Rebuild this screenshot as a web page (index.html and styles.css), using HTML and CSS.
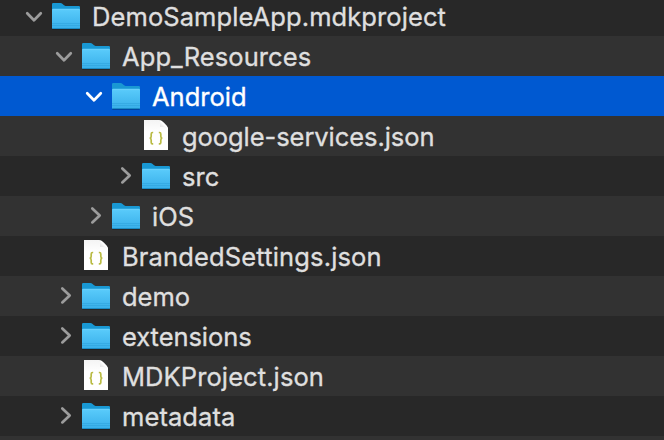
FILE: index.html
```html
<!DOCTYPE html>
<html lang="en">
<head>
<meta charset="utf-8">
<title>Project files</title>
<link rel="stylesheet" href="styles.css">
</head>
<body>
<svg class="defs" width="0" height="0" aria-hidden="true">
  <defs>
    <linearGradient id="front" x1="0" y1="0" x2="0" y2="1">
      <stop offset="0" stop-color="#60cdfb"/><stop offset=".12" stop-color="#56c8f9"/><stop offset="1" stop-color="#38afe9"/>
    </linearGradient>
    <linearGradient id="page" x1="0" y1="0" x2="0" y2="1">
      <stop offset="0" stop-color="#f4f4f4"/><stop offset=".4" stop-color="#fff"/>
    </linearGradient>
    <linearGradient id="fold" x1="0" y1="1" x2="1" y2="0">
      <stop offset="0" stop-color="#d2d2d2"/><stop offset=".5" stop-color="#fff"/>
    </linearGradient>
    <symbol id="folder" viewBox="0 0 32 40">
      <path d="M2.300 32.600h27.400v1.300H2.300z" fill="#000" opacity=".25"/>
      <path d="M2 8.200Q2 7 3.200 7h7.300q1 0 1.800.8l1.400 1.300q.8.8 1.800.8h13.300Q30 9.900 30 11.200V18H2z" fill="#1998d3"/>
      <path d="M2 14q0-1.200 1.200-1.200h25.600q1.200 0 1.200 1.200v17.800q0 1.200-1.200 1.200H3.200Q2 33 2 31.800z" fill="url(#front)"/>
      <path d="M2.500 13.400h27" stroke="#76d7ff" stroke-width=".8" opacity=".6"/>
      <path d="M2 27.500h28M2 29.500h28" stroke="#2498d2" stroke-width=".7" opacity=".5"/>
      <path d="M2.500 32.500h27" stroke="#1684bd" stroke-width="1" opacity=".85"/>
    </symbol>
    <symbol id="file" viewBox="0 0 32 40">
      <path d="M4 4h15.500L28 12v22H4z" fill="url(#page)"/>
      <path d="M19.500 4q1.200 3 .5 6.700 4-.4 8 1.600Q27.500 10 24 6.800 21.500 4.300 19.500 4z" fill="url(#fold)"/>
      <path d="M13.200 16.500h-.7q-1.300 0-1.300 1.400v2.300q0 1.700-1.400 2 1.400.3 1.400 2V26.500q0 1.400 1.300 1.400h.7M18.800 16.500h.7q1.300 0 1.300 1.400v2.300q0 1.700 1.400 2-1.400.3-1.400 2V26.500q0 1.400-1.300 1.400h-.7" fill="none" stroke="#b9bb45" stroke-width="1.700"/>
    </symbol>
    <symbol id="down" viewBox="0 0 28 40">
      <path d="M7.200 17.200 14 24.300l6.800-7.100" fill="none" stroke="currentColor" stroke-width="2.700" stroke-linecap="round" stroke-linejoin="round"/>
    </symbol>
    <symbol id="right" viewBox="0 0 28 40">
      <path d="M12.300 12.400 19.700 19.400l-7.400 7" fill="none" stroke="currentColor" stroke-width="2.700" stroke-linecap="round" stroke-linejoin="round"/>
    </symbol>
  </defs>
</svg>
<main class="tree">
  <div class="row"><svg class="chevron"><use href="#down"/></svg><svg class="icon"><use href="#folder"/></svg><span class="name loose">DemoSampleApp.mdkproject</span></div>
  <div class="row level-1"><svg class="chevron"><use href="#down"/></svg><svg class="icon"><use href="#folder"/></svg><span class="name loose">App_Resources</span></div>
  <div class="row level-2 selected"><svg class="chevron"><use href="#down"/></svg><svg class="icon"><use href="#folder"/></svg><span class="name">Android</span></div>
  <div class="row level-3"><span class="chevron"></span><svg class="icon"><use href="#file"/></svg><span class="name tight">google-services.json</span></div>
  <div class="row level-3"><svg class="chevron"><use href="#right"/></svg><svg class="icon"><use href="#folder"/></svg><span class="name">src</span></div>
  <div class="row level-2"><svg class="chevron"><use href="#right"/></svg><svg class="icon"><use href="#folder"/></svg><span class="name loose">iOS</span></div>
  <div class="row level-1"><span class="chevron"></span><svg class="icon"><use href="#file"/></svg><span class="name looser">BrandedSettings.json</span></div>
  <div class="row level-1"><svg class="chevron"><use href="#right"/></svg><svg class="icon"><use href="#folder"/></svg><span class="name">demo</span></div>
  <div class="row level-1"><svg class="chevron"><use href="#right"/></svg><svg class="icon"><use href="#folder"/></svg><span class="name tight">extensions</span></div>
  <div class="row level-1"><span class="chevron"></span><svg class="icon"><use href="#file"/></svg><span class="name loose">MDKProject.json</span></div>
  <div class="row level-1"><svg class="chevron"><use href="#right"/></svg><svg class="icon"><use href="#folder"/></svg><span class="name loose">metadata</span></div>
  <div class="row"></div>
</main>
</body>
</html>
```
FILE: styles.css
```css
* { box-sizing: border-box; }
body { margin: 0; height: 440px; overflow: hidden; background: #282828; }
.defs { position: absolute; }
.tree {
  height: 440px;
  overflow: hidden;
  display: flex;
  flex-direction: column;
  font: 400 25.5px/42px Inter, "Liberation Sans", sans-serif;
  color: #dfdfdf;
}
.row {
  flex: none;
  display: flex;
  height: 40px;
  padding-left: 20px;
  background: #282828;
  white-space: nowrap;
}
.row:first-child { height: 36px; align-items: flex-end; }
.row:nth-child(even) { background: #323232; }
.row.level-1 { padding-left: 50px; }
.row.level-2 { padding-left: 80px; }
.row.level-3 { padding-left: 110px; }
.row.selected { background: #0059d1; color: #fff; }
.chevron { flex: none; width: 28px; height: 40px; margin-right: 2px; color: #9c9c9c; }
.selected .chevron { color: #fff; }
.icon { flex: none; width: 32px; height: 40px; margin-right: 10px; }
.name { height: 40px; -webkit-text-stroke: .35px currentColor; }
.loose { letter-spacing: .09px; }
.looser { letter-spacing: .15px; }
.tight { letter-spacing: -.06px; }
```
